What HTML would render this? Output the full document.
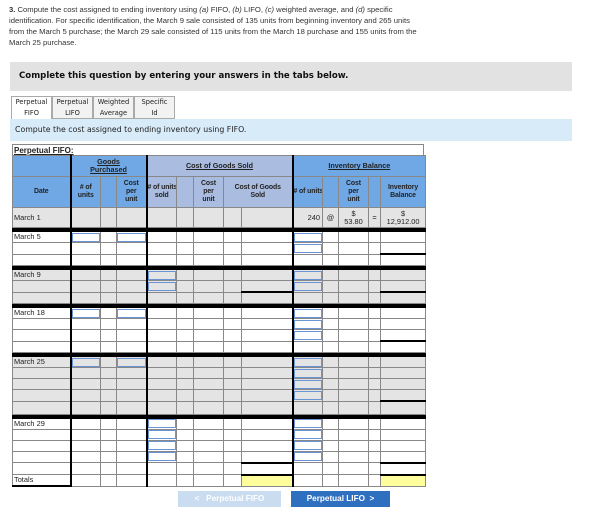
<!DOCTYPE html>
<html><head><style>
body{margin:0;width:605px;height:532px;background:#fff;font-family:"Liberation Sans",sans-serif;color:#222;position:relative;overflow:hidden}
.q{position:absolute;left:9px;top:4px;font-size:7.65px;line-height:11px;color:#333;white-space:nowrap}
.box{position:absolute;left:10px;top:62px;width:562px;height:29px;background:#e2e2e2}
.box b{position:absolute;left:9px;top:9px;font-size:8.6px;font-family:"DejaVu Sans",sans-serif;font-weight:bold;color:#111}
.tabs{position:absolute;left:11px;top:96px;height:22px;display:flex;font-family:"DejaVu Sans Condensed","DejaVu Sans",sans-serif;font-size:7.4px}
.tab{border:1px solid #aaa;background:#f2f2f2;text-align:center;line-height:10.5px;box-sizing:border-box;height:23px;width:41px;margin-right:0;white-space:nowrap;overflow:hidden}
.tab.a{background:#fff;border-bottom:none}
.bar{position:absolute;left:10px;top:119px;width:562px;height:22px;background:#d8ebf9;font-family:"DejaVu Sans",sans-serif;font-size:7.8px;line-height:22px}
.bar span{margin-left:5px}
.ttl{position:absolute;left:12px;top:144px;width:412px;height:12px;border:1px solid #888;border-bottom:none;font-size:8px;font-weight:bold;line-height:12px;box-sizing:border-box;padding-left:1px}
table{position:absolute;left:12px;top:155px;border-collapse:collapse;table-layout:fixed;width:413px;font-size:7.4px}
td{border:1px solid #888;height:10px;padding:0;overflow:hidden;white-space:nowrap;line-height:10px}
tr.g td{background:#e4e4e4}
tr.s td{background:#000;height:3px;border:1px solid #000}
.h1 td{background:#70a8e6;height:20px;text-align:center;font-weight:bold;line-height:8px;white-space:nowrap;font-size:7.2px}
.h1 td.c,.h2 td.c{background:#aabde0}
.h2 td{background:#70a8e6;height:30px;text-align:center;font-weight:bold;line-height:8px;white-space:nowrap;font-size:6.9px;letter-spacing:-0.1px}
.u{text-decoration:underline}
td.k{border-left:2px solid #000}
td.i i{display:block;margin:0;height:7px;border:1px solid #6a94d4;background:#fff}
tr.g td.i i{background:#e4e4e4}
td.y{background:#fdfd9c!important}
td.t{border-top:2px solid #000}
td.d{padding-left:1px}
.btn{position:absolute;top:491px;height:16px;font-size:8.2px;font-weight:bold;color:#fff;line-height:16px;text-align:center}
</style></head><body>
<div class="q"><b>3.</b> Compute the cost assigned to ending inventory using <i>(a)</i> FIFO, <i>(b)</i> LIFO, <i>(c)</i> weighted average, and <i>(d)</i> specific<br>identification. For specific identification, the March 9 sale consisted of 135 units from beginning inventory and 265 units<br>from the March 5 purchase; the March 29 sale consisted of 115 units from the March 18 purchase and 155 units from the<br>March 25 purchase.</div>
<div class="box"><b>Complete this question by entering your answers in the tabs below.</b></div>
<div class="tabs"><div class="tab a">Perpetual<br>FIFO</div><div class="tab">Perpetual<br>LIFO</div><div class="tab">Weighted<br>Average</div><div class="tab">Specific<br>Id</div></div>
<div class="bar"><span>Compute the cost assigned to ending inventory using FIFO.</span></div>
<div class="ttl"><span class="u">Perpetual FIFO:</span></div>
<table>
<colgroup><col style="width:58px"><col style="width:30px"><col style="width:16px"><col style="width:30px"><col style="width:30px"><col style="width:17px"><col style="width:30px"><col style="width:18px"><col style="width:51px"><col style="width:30px"><col style="width:16px"><col style="width:30px"><col style="width:12px"><col style="width:45px"></colgroup>
<tr class="h1"><td></td><td colspan="3" class="k"><span class="u">Goods<br>Purchased</span></td><td colspan="5" class="c k"><span class="u">Cost of Goods Sold</span></td><td colspan="5" class="k"><span class="u">Inventory Balance</span></td></tr>
<tr class="h2"><td>Date</td><td class="k"># of<br>units</td><td></td><td>Cost<br>per<br>unit</td><td class="c k"># of units<br>sold</td><td class="c"></td><td class="c">Cost<br>per<br>unit</td><td class="c" colspan="2">Cost of Goods<br>Sold</td><td class="k"># of units</td><td></td><td>Cost<br>per<br>unit</td><td></td><td>Inventory<br>Balance</td></tr>
<tr class="g"><td class="d" style="height:19px">March 1</td><td class="k"></td><td></td><td></td><td class="k"></td><td></td><td></td><td></td><td></td><td class="k" style="text-align:right;padding-right:2px">240</td><td style="text-align:center">@</td><td style="text-align:center;line-height:8px">$<br>53.80</td><td style="text-align:center">=</td><td style="text-align:center;line-height:8px">$<br>12,912.00</td></tr>
<tr class="s"><td colspan="14"></td></tr>
<tr><td class="d">March 5</td><td class="k i"><i></i></td><td></td><td class="i"><i></i></td><td class="k"></td><td></td><td></td><td></td><td></td><td class="k i"><i></i></td><td></td><td></td><td></td><td></td></tr>
<tr><td></td><td class="k"></td><td></td><td></td><td class="k"></td><td></td><td></td><td></td><td></td><td class="k i"><i></i></td><td></td><td></td><td></td><td></td></tr>
<tr><td></td><td class="k"></td><td></td><td></td><td class="k"></td><td></td><td></td><td></td><td></td><td class="k"></td><td></td><td></td><td></td><td class="t"></td></tr>
<tr class="s"><td colspan="14"></td></tr>
<tr class="g"><td class="d">March 9</td><td class="k"></td><td></td><td></td><td class="k i"><i></i></td><td></td><td></td><td></td><td></td><td class="k i"><i></i></td><td></td><td></td><td></td><td></td></tr>
<tr class="g"><td></td><td class="k"></td><td></td><td></td><td class="k i"><i></i></td><td></td><td></td><td></td><td></td><td class="k i"><i></i></td><td></td><td></td><td></td><td></td></tr>
<tr class="g"><td></td><td class="k"></td><td></td><td></td><td class="k"></td><td></td><td></td><td></td><td class="t"></td><td class="k"></td><td></td><td></td><td></td><td class="t"></td></tr>
<tr class="s"><td colspan="14"></td></tr>
<tr><td class="d">March 18</td><td class="k i"><i></i></td><td></td><td class="i"><i></i></td><td class="k"></td><td></td><td></td><td></td><td></td><td class="k i"><i></i></td><td></td><td></td><td></td><td></td></tr>
<tr><td></td><td class="k"></td><td></td><td></td><td class="k"></td><td></td><td></td><td></td><td></td><td class="k i"><i></i></td><td></td><td></td><td></td><td></td></tr>
<tr><td></td><td class="k"></td><td></td><td></td><td class="k"></td><td></td><td></td><td></td><td></td><td class="k i"><i></i></td><td></td><td></td><td></td><td></td></tr>
<tr><td></td><td class="k"></td><td></td><td></td><td class="k"></td><td></td><td></td><td></td><td></td><td class="k"></td><td></td><td></td><td></td><td class="t"></td></tr>
<tr class="s"><td colspan="14"></td></tr>
<tr class="g"><td class="d">March 25</td><td class="k i"><i></i></td><td></td><td class="i"><i></i></td><td class="k"></td><td></td><td></td><td></td><td></td><td class="k i"><i></i></td><td></td><td></td><td></td><td></td></tr>
<tr class="g"><td></td><td class="k"></td><td></td><td></td><td class="k"></td><td></td><td></td><td></td><td></td><td class="k i"><i></i></td><td></td><td></td><td></td><td></td></tr>
<tr class="g"><td></td><td class="k"></td><td></td><td></td><td class="k"></td><td></td><td></td><td></td><td></td><td class="k i"><i></i></td><td></td><td></td><td></td><td></td></tr>
<tr class="g"><td></td><td class="k"></td><td></td><td></td><td class="k"></td><td></td><td></td><td></td><td></td><td class="k i"><i></i></td><td></td><td></td><td></td><td></td></tr>
<tr class="g"><td style="height:12px"></td><td class="k"></td><td></td><td></td><td class="k"></td><td></td><td></td><td></td><td></td><td class="k"></td><td></td><td></td><td></td><td class="t"></td></tr>
<tr class="s"><td colspan="14"></td></tr>
<tr><td class="d">March 29</td><td class="k"></td><td></td><td></td><td class="k i"><i></i></td><td></td><td></td><td></td><td></td><td class="k i"><i></i></td><td></td><td></td><td></td><td></td></tr>
<tr><td></td><td class="k"></td><td></td><td></td><td class="k i"><i></i></td><td></td><td></td><td></td><td></td><td class="k i"><i></i></td><td></td><td></td><td></td><td></td></tr>
<tr><td></td><td class="k"></td><td></td><td></td><td class="k i"><i></i></td><td></td><td></td><td></td><td></td><td class="k i"><i></i></td><td></td><td></td><td></td><td></td></tr>
<tr><td></td><td class="k"></td><td></td><td></td><td class="k i"><i></i></td><td></td><td></td><td></td><td></td><td class="k i"><i></i></td><td></td><td></td><td></td><td></td></tr>
<tr><td style="height:11px"></td><td class="k"></td><td></td><td></td><td class="k"></td><td></td><td></td><td></td><td class="t"></td><td class="k"></td><td></td><td></td><td></td><td class="t"></td></tr>
<tr><td class="d" style="border-bottom:2px solid #000">Totals</td><td class="k"></td><td></td><td></td><td class="k"></td><td></td><td></td><td></td><td class="y t"></td><td class="k"></td><td></td><td></td><td></td><td class="y t"></td></tr>
</table>
<div class="btn" style="left:178px;width:103px;background:#c9dcf0">&lt;&nbsp;&nbsp; Perpetual FIFO</div>
<div class="btn" style="left:291px;width:99px;background:#2f6fc0">Perpetual LIFO &nbsp;&gt;</div>
</body></html>
